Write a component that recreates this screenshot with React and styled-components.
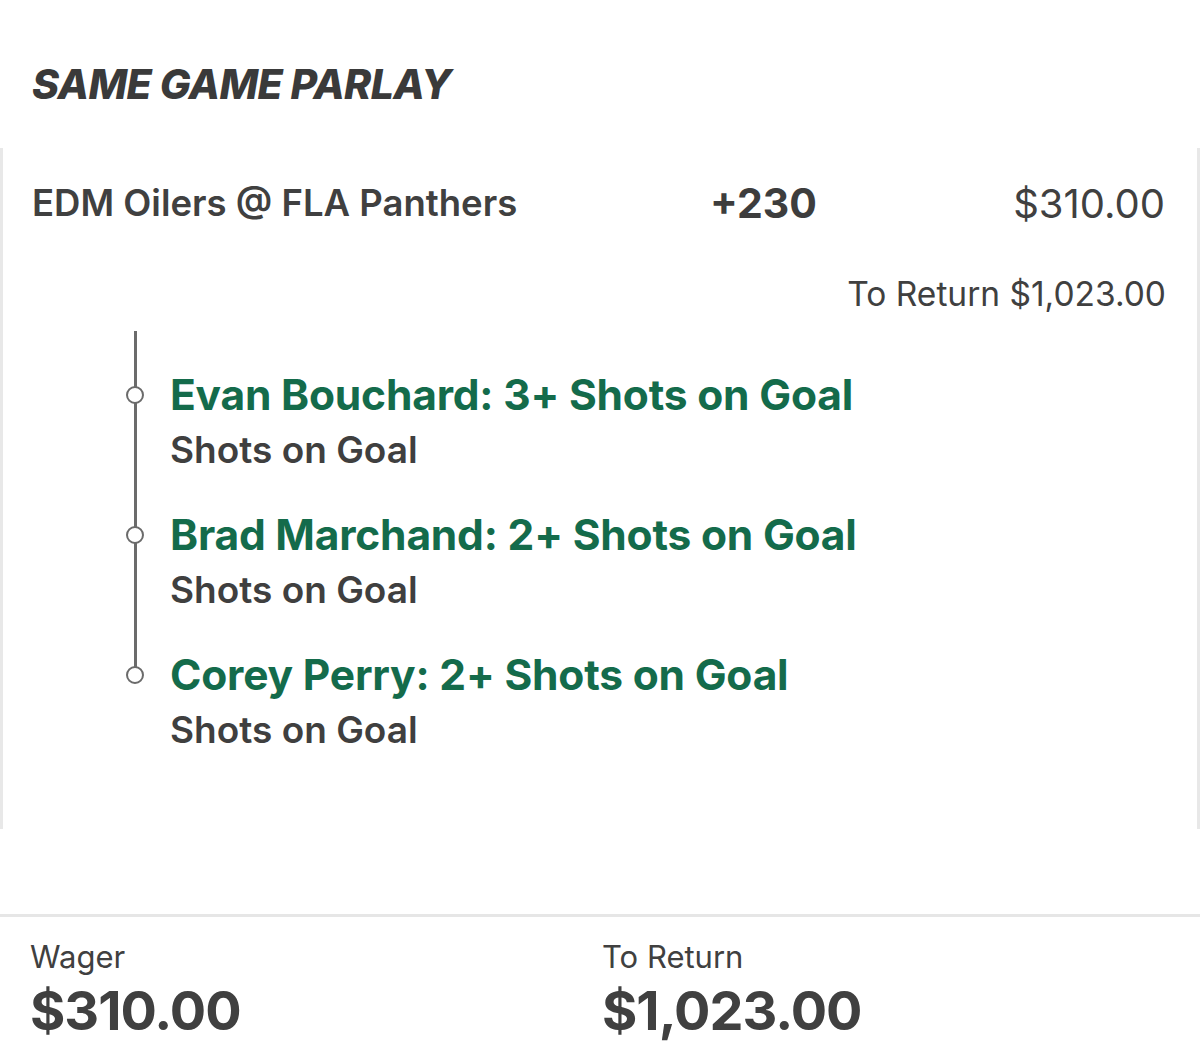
import React from "react";
import styled, { createGlobalStyle } from "styled-components";

const GlobalStyle = createGlobalStyle`
  body {
    margin: 0;
    background: #ffffff;
    font-family: Inter, "Noto Sans", "Liberation Sans", sans-serif;
    color: #3d3d3d;
  }
`;

const legs = [
  { pick: "Evan Bouchard: 3+ Shots on Goal", market: "Shots on Goal" },
  { pick: "Brad Marchand: 2+ Shots on Goal", market: "Shots on Goal" },
  { pick: "Corey Perry: 2+ Shots on Goal", market: "Shots on Goal" },
];

const App = () => {
  return (
    <Page>
      <GlobalStyle />
      <Header>SAME GAME PARLAY</Header>
      <Card>
        <GameRow>
          <GameName>EDM Oilers @ FLA Panthers</GameName>
          <Odds>+230</Odds>
          <Stake>$310.00</Stake>
        </GameRow>
        <ReturnLine>To Return $1,023.00</ReturnLine>
        <Timeline>
          {legs.map((leg, i) => (
            <Leg key={i} last={i === legs.length - 1}>
              <Pick>{leg.pick}</Pick>
              <Market>{leg.market}</Market>
            </Leg>
          ))}
        </Timeline>
      </Card>
      <Footer>
        <Stat>
          <StatLabel>Wager</StatLabel>
          <StatValue>$310.00</StatValue>
        </Stat>
        <Stat>
          <StatLabel>To Return</StatLabel>
          <StatValue>$1,023.00</StatValue>
        </Stat>
      </Footer>
    </Page>
  );
};

const Page = styled.div`
  width: 1200px;
  height: 1058px;
  overflow: hidden;
`;

const Header = styled.h1`
  margin: 0;
  height: 148px;
  box-sizing: border-box;
  padding: 58px 0 0 32px;
  font-size: 41px;
  line-height: 52px;
  font-weight: 800;
  font-style: italic;
  color: #3a3a3a;
  letter-spacing: -0.6px;
`;

const Card = styled.section`
  border-left: 3px solid #e8e8e8;
  border-right: 3px solid #e8e8e8;
  padding: 30px 29px 78px 29px;
`;

const GameRow = styled.div`
  display: grid;
  grid-template-columns: 678px auto 1fr;
  align-items: center;
  height: 44px;
`;

const GameName = styled.div`
  font-size: 36.5px;
  font-weight: 600;
  color: #404040;
`;

const Odds = styled.div`
  font-size: 41px;
  font-weight: 700;
  color: #3d3d3d;
`;

const Stake = styled.div`
  font-size: 40px;
  font-weight: 400;
  text-align: right;
  color: #404040;
  padding-right: 3px;
`;

const ReturnLine = styled.div`
  margin-top: 52px;
  text-align: right;
  font-size: 33.5px;
  line-height: 40px;
  color: #404040;
  padding-right: 2px;
`;

const Timeline = styled.div`
  margin: 17px 0 0 103px;
`;

const Leg = styled.div`
  position: relative;
  height: 140px;
  box-sizing: border-box;
  padding: 40px 0 0 35px;

  &::before {
    content: "";
    position: absolute;
    left: -1px;
    top: 0;
    width: 2.5px;
    height: ${(p) => (p.last ? "56px" : "100%")};
    background: #6b6b6b;
  }

  &::after {
    content: "";
    position: absolute;
    left: -9px;
    top: 55px;
    width: 14px;
    height: 14px;
    border: 2.5px solid #6b6b6b;
    border-radius: 50%;
    background: #ffffff;
  }
`;

const Pick = styled.div`
  font-size: 42.5px;
  line-height: 48px;
  font-weight: 700;
  color: #146b4b;
  white-space: nowrap;
  letter-spacing: -0.2px;
`;

const Market = styled.div`
  margin-top: 10px;
  font-size: 37px;
  line-height: 42px;
  font-weight: 600;
  color: #3f3f3f;
`;

const Footer = styled.footer`
  margin-top: 85px;
  border-top: 3px solid #e6e6e6;
  display: grid;
  grid-template-columns: 572px 1fr;
  padding: 20px 30px 0 30px;
`;

const Stat = styled.div`
  display: flex;
  flex-direction: column;
`;

const StatLabel = styled.div`
  font-size: 31px;
  line-height: 40px;
  font-weight: 400;
  color: #404040;
`;

const StatValue = styled.div`
  margin-top: 2px;
  font-size: 54px;
  line-height: 64px;
  font-weight: 700;
  color: #404040;
  letter-spacing: -1px;
`;

export default App;
